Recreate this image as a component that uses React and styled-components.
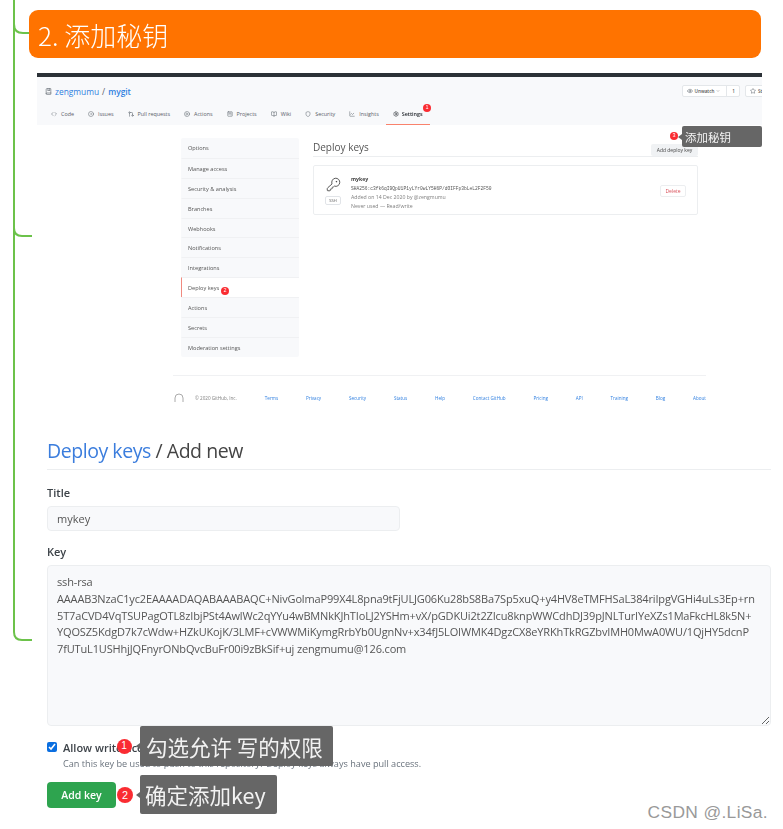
import React from "react";
import styled, { createGlobalStyle } from "styled-components";
import {
  BookMarked,
  ChartLine,
  CircleDot,
  CirclePlay,
  Code,
  BookOpen,
  ChevronDown,
  Eye,
  GitPullRequest,
  KeyRound,
  Settings,
  Shield,
  SquareKanban,
  Star,
} from "lucide-react";

const UI = `"Open Sans", "Noto Sans CJK SC", sans-serif`;
const CJK = `"Noto Sans CJK SC", "Open Sans", sans-serif`;

const GlobalStyle = createGlobalStyle`
  html, body { margin: 0; padding: 0; background: #fff; }
  * { box-sizing: border-box; }
`;

const Page = styled.div`
  position: relative;
  width: 783px;
  height: 829px;
  overflow: hidden;
  background: #fff;
  font-family: ${UI};
`;

const Tree = styled.svg`
  position: absolute;
  left: 0;
  top: 0;
`;

const Banner = styled.div`
  display: flex;
  align-items: center;
  width: 732px;
  height: 48px;
  margin: 10px 0 0 29px;
  padding: 0 0 0 9px;
  border-radius: 9px;
  background: #ff7300;
  color: #fff;
  font-family: ${CJK};
  font-size: 26px;
  font-weight: 300;
  filter: blur(0.4px);
`;

const Shot = styled.section`
  width: 725px;
  height: 337px;
  margin: 15px 0 0 37px;
  overflow: hidden;
  filter: blur(0.7px);
`;

const TopBar = styled.div`
  height: 4px;
  background: #2b3137;
`;

const RepoHead = styled.header`
  height: 48px;
  background: #f8f9fb;
  display: flex;
  flex-direction: column;
`;

const RepoRow = styled.div`
  display: flex;
  align-items: center;
  height: 22px;
  margin-top: 3px;
  padding-left: 8px;
  font-size: 8.4px;
  color: #2f7fe0;
`;

const RepoName = styled.span`
  margin-left: 3px;
  font-weight: ${(p) => (p.$bold ? 600 : 400)};
  color: ${(p) => (p.$dim ? "#586069" : "#2f7fe0")};
`;

const RepoActions = styled.div`
  display: flex;
  gap: 5px;
  margin-left: auto;
  margin-right: -10px;
`;

const Pill = styled.div`
  display: flex;
  align-items: center;
  gap: 2px;
  height: 12px;
  padding: 0 4px;
  background: #fff;
  border: 0.5px solid #e4e7ea;
  border-radius: 2px;
  color: #555;
  font-size: 4.6px;
  font-weight: 600;
`;

const Count = styled.span`
  margin-left: 4px;
  padding-left: 5px;
  border-left: 0.5px solid #e4e7ea;
  line-height: 12px;
`;

const Tabs = styled.nav`
  display: flex;
  margin-top: auto;
  padding-left: 7px;
`;

const Tab = styled.div`
  display: flex;
  align-items: center;
  gap: ${(p) => (p.$active ? 3 : 4)}px;
  height: 19px;
  padding: 0 7px 3px;
  font-size: 5.4px;
  color: ${(p) => (p.$active ? "#24292e" : "#586069")};
  font-weight: ${(p) => (p.$active ? 600 : 400)};
  border-bottom: 1px solid ${(p) => (p.$active ? "#f9826c" : "transparent")};
`;

const Settle = styled.div`
  display: flex;
  padding: 13px 0 0 144px;
  height: 250px;
`;

const Side = styled.aside`
  width: 118px;
  height: 219px;
  border-radius: 2px;
  background: #f8f9fb;
`;

const SideRow = styled.div`
  display: flex;
  align-items: center;
  height: 19.9px;
  padding: 1px 0 0 6px;
  font-size: 5.6px;
  color: #555;
  border-top: ${(p) => (p.$first ? "0" : "0.5px solid #f0f1f3")};
  border-left: 1px solid ${(p) => (p.$active ? "#f08a80" : "transparent")};
  background: ${(p) => (p.$active ? "#fff" : "transparent")};
`;

const Main = styled.div`
  width: 385px;
  margin-left: 14px;
`;

const MainHead = styled.div`
  display: flex;
  align-items: center;
  justify-content: space-between;
  height: 19px;
  border-bottom: 0.5px solid #eceef0;
  color: #555;
  font-size: 10px;
`;

const SmallButton = styled.div`
  display: flex;
  align-items: center;
  justify-content: center;
  width: 47px;
  height: 12px;
  margin-top: 5px;
  background: #f0f2f4;
  border-radius: 2px;
  color: #444;
  font-size: 5px;
`;

const KeyCard = styled.div`
  display: flex;
  align-items: flex-start;
  height: 50px;
  margin-top: 8px;
  padding: 9px 11px;
  border: 0.5px solid #eceef0;
  border-radius: 2px;
`;

const KeyMark = styled.div`
  display: flex;
  flex-direction: column;
  align-items: center;
  gap: 4px;
  width: 16px;
  color: #444;
  padding-top: 2px;
`;

const SshTag = styled.span`
  padding: 0 3px;
  border: 0.5px solid #e1e4e8;
  border-radius: 2px;
  font-size: 4px;
  line-height: 7px;
  color: #555;
`;

const KeyInfo = styled.div`
  margin-left: 10px;
  font-size: 5.2px;
  line-height: 9px;
  color: #808080;
`;

const KeyName = styled.div`
  font-weight: 700;
  color: #444;
`;

const Finger = styled.div`
  font-family: "Liberation Mono", monospace;
  font-size: 4.6px;
  color: #555;
`;

const DeleteButton = styled.div`
  display: flex;
  align-items: center;
  justify-content: center;
  width: 26px;
  height: 12px;
  margin: 10px 0 0 auto;
  border: 0.5px solid #eceef0;
  border-radius: 2px;
  color: #d9505a;
  font-size: 5px;
`;

const Foot = styled.footer`
  display: flex;
  align-items: center;
  width: 533px;
  height: 35px;
  margin-left: 136px;
  padding: 9px 0 0 1px;
  border-top: 0.5px solid #f0f1f3;
  font-size: 4.6px;
  color: #808080;
`;

const FootCopy = styled.span`
  margin-left: 11px;
`;

const FootLinks = styled.div`
  display: flex;
  justify-content: space-between;
  flex: 1;
  margin-left: 28px;
  color: #2f7fe0;
`;

const Form = styled.form`
  width: 724px;
  margin-left: 47px;
  filter: blur(0.3px);
`;

const Title = styled.h2`
  margin: 26px 0 0;
  height: 34px;
  border-bottom: 1px solid #eceef0;
  font-size: 19.5px;
  letter-spacing: -0.45px;
  font-weight: 400;
  line-height: 30px;
  color: #444;
`;

const Crumb = styled.span`
  color: #3b7ddd;
`;

const Label = styled.label`
  display: block;
  margin-top: ${(p) => p.$top}px;
  font-size: 11px;
  line-height: 16px;
  font-weight: 600;
  color: #3c4248;
`;

const TextField = styled.input`
  display: block;
  width: 353px;
  height: 25px;
  margin: 5px 0 0;
  padding: 0 9px;
  background: #f8f9fb;
  border: 1px solid #eceef0;
  border-radius: 4px;
  font-family: ${UI};
  font-size: 11px;
  color: #555;
`;

const KeyArea = styled.textarea`
  display: block;
  width: 724px;
  height: 161px;
  margin: 5px 0 0;
  padding: 8px 9px;
  background: #f8f9fb;
  border: 1px solid #eceef0;
  border-radius: 4px;
  font-family: ${UI};
  font-size: 11px;
  letter-spacing: -0.15px;
  line-height: 16.75px;
  color: #555;
  white-space: pre;
  overflow: hidden;
  resize: vertical;
`;

const CheckRow = styled.div`
  display: flex;
  align-items: center;
  gap: 6px;
  height: 12px;
  margin-top: 15px;
`;

const Box = styled.input`
  width: 10px;
  height: 10px;
  margin: 0;
  accent-color: #0a6ee0;
`;

const CheckLabel = styled.span`
  font-size: 11px;
  font-weight: 600;
  color: #3c4248;
`;

const Hint = styled.div`
  margin: 4px 0 0 16px;
  font-size: 9.15px;
  line-height: 14px;
  color: #6a737d;
`;

const SubmitButton = styled.button`
  display: block;
  width: 69px;
  height: 26px;
  margin-top: 11px;
  border: 0;
  border-radius: 4px;
  background: #2ea44f;
  color: #fff;
  font-family: ${UI};
  font-size: 10.5px;
  font-weight: 600;
`;

const Callout = styled.div`
  position: absolute;
  left: ${(p) => p.$x}px;
  top: ${(p) => p.$y}px;
  width: ${(p) => p.$w}px;
  height: ${(p) => p.$h}px;
  display: flex;
  align-items: center;
  padding-left: ${(p) => p.$pad}px;
  background: #666;
  border-radius: 2px;
  color: #f2f2f2;
  font-family: ${CJK};
  font-size: ${(p) => p.$size}px;
  white-space: pre;
  filter: blur(0.3px);

  &::before {
    content: "";
    position: absolute;
    left: -4px;
    top: 50%;
    margin-top: -3px;
    border-style: solid;
    border-width: 3px 4px 3px 0;
    border-color: transparent #666 transparent transparent;
  }
`;

const Badge = styled.div`
  position: absolute;
  left: ${(p) => p.$x - p.$r}px;
  top: ${(p) => p.$y - p.$r}px;
  width: ${(p) => p.$r * 2}px;
  height: ${(p) => p.$r * 2}px;
  display: flex;
  align-items: center;
  justify-content: center;
  border-radius: 50%;
  background: #fa2c32;
  color: #fff;
  font-family: "Liberation Sans", sans-serif;
  font-size: ${(p) => p.$r * 1.35}px;
  line-height: 1;
`;

const Watermark = styled.div`
  position: absolute;
  right: 15px;
  top: 803px;
  font-family: "Liberation Sans", sans-serif;
  font-size: 17.4px;
  line-height: 19px;
  color: #999;
  letter-spacing: 0.35px;
`;

const tabs = [
  ["Code", Code],
  ["Issues", CircleDot],
  ["Pull requests", GitPullRequest],
  ["Actions", CirclePlay],
  ["Projects", SquareKanban],
  ["Wiki", BookOpen],
  ["Security", Shield],
  ["Insights", ChartLine],
  ["Settings", Settings],
];

const sideItems = [
  "Options",
  "Manage access",
  "Security & analysis",
  "Branches",
  "Webhooks",
  "Notifications",
  "Integrations",
  "Deploy keys",
  "Actions",
  "Secrets",
  "Moderation settings",
];

const footLinks = ["Terms", "Privacy", "Security", "Status", "Help", "Contact GitHub", "Pricing", "API", "Training", "Blog", "About"];

const sshKey = [
  "ssh-rsa",
  "AAAAB3NzaC1yc2EAAAADAQABAAABAQC+NivGolmaP99X4L8pna9tFjULJG06Ku28bS8Ba7Sp5xuQ+y4HV8eTMFHSaL384riIpgVGHi4uLs3Ep+rn",
  "5T7aCVD4VqTSUPagOTL8zIbjPSt4AwlWc2qYYu4wBMNkKJhTIoLJ2YSHm+vX/pGDKUi2t2ZIcu8knpWWCdhDJ39pJNLTurIYeXZs1MaFkcHL8k5N+",
  "YQOSZ5KdgD7k7cWdw+HZkUKojK/3LMF+cVWWMiKymgRrbYb0UgnNv+x34fJ5LOIWMK4DgzCX8eYRKhTkRGZbvIMH0MwA0WU/1QjHY5dcnP",
  "7fUTuL1USHhjJQFnyrONbQvcBuFr00i9zBkSif+uj zengmumu@126.com",
].join("\n");

export default function App() {
  return (
    <Page>
      <GlobalStyle />
      <Tree width="40" height="660" fill="none" stroke="#6cc24a" strokeWidth="2">
        <path d="M14 0V632Q14 640 22 640H32" />
        <path d="M14 24Q14 33 23 33H30" />
        <path d="M14 228Q14 236 22 236H32" />
      </Tree>

      <Banner>2. 添加秘钥</Banner>

      <Shot>
        <TopBar />
        <RepoHead>
          <RepoRow>
            <BookMarked size={7} color="#586069" />
            <RepoName>zengmumu</RepoName>
            <RepoName $dim>/</RepoName>
            <RepoName $bold>mygit</RepoName>
            <RepoActions>
              <Pill>
                <Eye size={6} color="#586069" />
                Unwatch
                <ChevronDown size={4} />
                <Count>1</Count>
              </Pill>
              <Pill>
                <Star size={6} color="#586069" />
                Star
              </Pill>
            </RepoActions>
          </RepoRow>
          <Tabs>
            {tabs.map(([name, Icon]) => (
              <Tab key={name} $active={name === "Settings"}>
                <Icon size={6} />
                {name}
              </Tab>
            ))}
          </Tabs>
        </RepoHead>

        <Settle>
          <Side>
            {sideItems.map((item, i) => (
              <SideRow key={item} $first={i === 0} $active={item === "Deploy keys"}>
                {item}
              </SideRow>
            ))}
          </Side>
          <Main>
            <MainHead>
              Deploy keys
              <SmallButton>Add deploy key</SmallButton>
            </MainHead>
            <KeyCard>
              <KeyMark>
                <KeyRound size={15} strokeWidth={1.4} />
                <SshTag>SSH</SshTag>
              </KeyMark>
              <KeyInfo>
                <KeyName>mykey</KeyName>
                <Finger>SHA256:c3fk6qI9QpU1P1yLYr0wLY5H6P/dOIFFp3bLeL2F2F50</Finger>
                <div>Added on 14 Dec 2020 by @zengmumu</div>
                <div>Never used — Read/write</div>
              </KeyInfo>
              <DeleteButton>Delete</DeleteButton>
            </KeyCard>
          </Main>
        </Settle>

        <Foot>
          <svg width="10" height="10" viewBox="0 0 10 10" fill="none" stroke="#aaa" strokeWidth="1">
            <path d="M1 9V5a4 4 0 0 1 8 0v4" />
          </svg>
          <FootCopy>© 2020 GitHub, Inc.</FootCopy>
          <FootLinks>
            {footLinks.map((l) => (
              <span key={l}>{l}</span>
            ))}
          </FootLinks>
        </Foot>
      </Shot>

      <Form>
        <Title>
          <Crumb>Deploy keys</Crumb> / Add new
        </Title>
        <Label $top={15}>Title</Label>
        <TextField readOnly value="mykey" />
        <Label $top={13}>Key</Label>
        <KeyArea readOnly value={sshKey} wrap="off" />
        <CheckRow>
          <Box type="checkbox" readOnly checked />
          <CheckLabel>Allow write access</CheckLabel>
        </CheckRow>
        <Hint>Can this key be used to push to this repository? Deploy keys always have pull access.</Hint>
        <SubmitButton type="button">Add key</SubmitButton>
      </Form>

      <Badge $x={427} $y={108} $r={4}>1</Badge>
      <Badge $x={225} $y={291} $r={4}>2</Badge>
      <Badge $x={674} $y={136} $r={4}>3</Badge>
      <Callout $x={682} $y={126} $w={80} $h={21} $pad={3} $size={11.5}>添加秘钥</Callout>
      <Badge $x={124} $y={746} $r={7.5}>1</Badge>
      <Callout $x={140} $y={726} $w={193} $h={40} $pad={6} $size={21.5}>勾选允许 写的权限</Callout>
      <Badge $x={125} $y={795} $r={8}>2</Badge>
      <Callout $x={140} $y={775} $w={137} $h={39} $pad={5} $size={21.5}>确定添加key</Callout>
      <Watermark>CSDN @.LiSa.</Watermark>
    </Page>
  );
}
